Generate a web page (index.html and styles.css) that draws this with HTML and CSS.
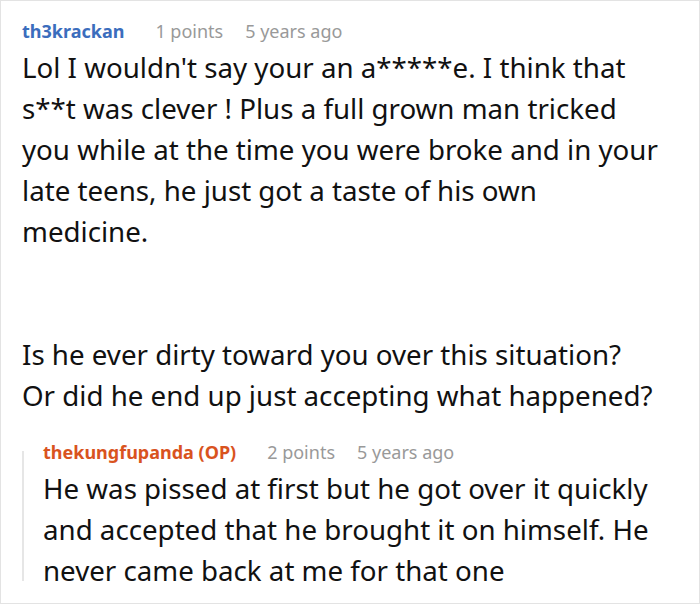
FILE: index.html
```html
<!DOCTYPE html>
<html>
<head>
<meta charset="utf-8">
<link rel="stylesheet" href="styles.css">
</head>
<body>
<div class="frame">
  <div class="comment">
    <div class="meta">
      <span class="author">th3krackan</span>
      <span class="info">1 points</span>
      <span class="info">5 years ago</span>
    </div>
    <div class="text">
      <p>Lol I wouldn't say your an a*****e. I think that s**t was clever ! Plus a full grown man tricked you while at the time you were broke and in your late teens, he just got a taste of his own medicine.</p>
      <p class="gap">Is he ever dirty toward you over this situation?<br>Or did he end up just accepting what happened?</p>
    </div>
    <div class="reply">
      <div class="meta">
        <span class="author op">thekungfupanda (OP)</span>
        <span class="info">2 points</span>
        <span class="info">5 years ago</span>
      </div>
      <div class="text">
        <p>He was pissed at first but he got over it quickly and accepted that he brought it on himself. He never came back at me for that one</p>
      </div>
    </div>
  </div>
</div>
</body>
</html>
```
FILE: styles.css
```css
html, body {
  margin: 0;
  padding: 0;
  background: #fff;
}
.frame {
  width: 700px;
  height: 604px;
  box-sizing: border-box;
  border: 1px solid #e3e3e3;
  overflow: hidden;
  font-family: "Noto Sans", sans-serif;
  color: #111;
}
.comment {
  padding: 17px 34px 0 21px;
}
.meta {
  display: flex;
  align-items: baseline;
  gap: 22px;
  font-size: 18px;
  line-height: 26px;
  margin-bottom: 3px;
}
.author {
  font-weight: 700;
  color: #3b6dbd;
  margin-right: 9px;
}
.author.op {
  color: #d9531e;
}
.info {
  color: #999;
}
.text {
  font-size: 27.7px;
  line-height: 41px;
}
.text p {
  margin: 0;
}
.text p.gap {
  margin-top: 82px;
}
.reply {
  position: relative;
  margin-top: 23px;
  padding-left: 21px;
}
.reply::before {
  content: "";
  position: absolute;
  left: 0;
  top: 12px;
  bottom: 10px;
  width: 2px;
  background: #e6e6e6;
}
```
